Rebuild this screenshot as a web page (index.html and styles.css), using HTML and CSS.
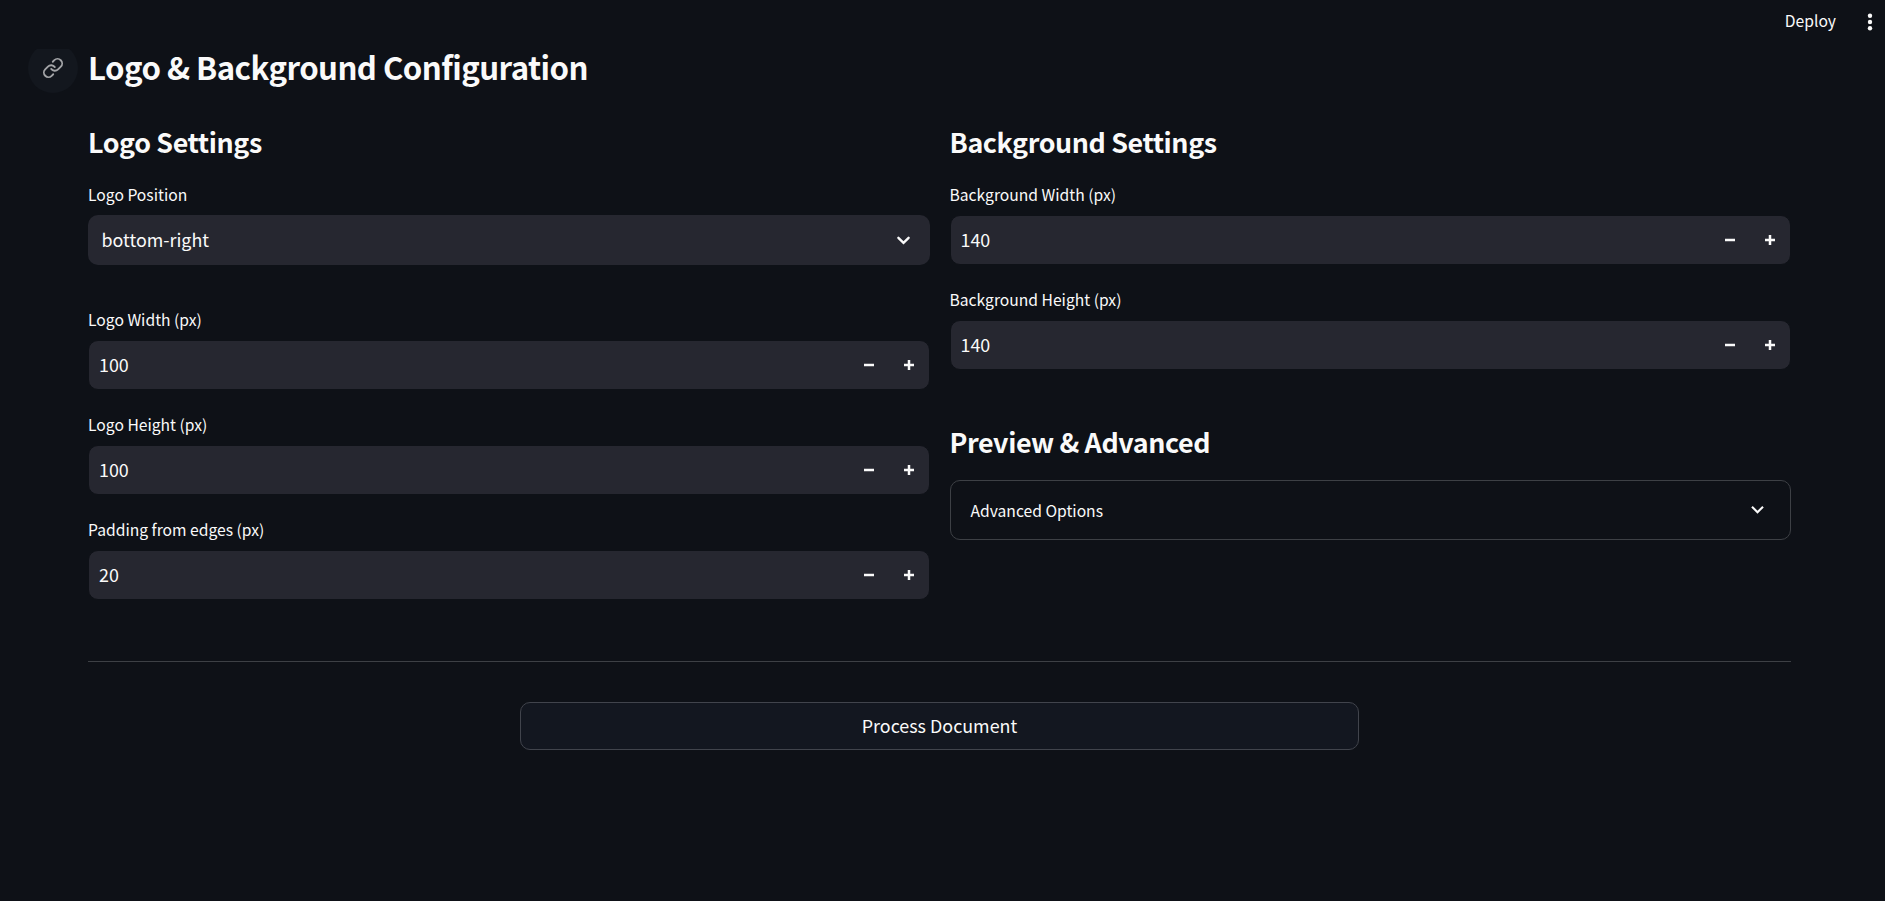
FILE: index.html
```
<!DOCTYPE html>
<html lang="en">
<head>
<meta charset="utf-8">
<title>Logo &amp; Background Configuration</title>
<link rel="stylesheet" href="styles.css">
</head>
<body>
<svg width="0" height="0" class="defs">
  <symbol id="minus" viewBox="0 0 8 8"><path d="M0 3h8v2H0z"/></symbol>
  <symbol id="plus" viewBox="0 0 8 8"><path d="M3 0h2v3h3v2H5v3H3V5H0V3h3z"/></symbol>
  <symbol id="chevron" viewBox="0 0 24 24"><path d="M7.41 8.59 12 13.17l4.59-4.58L18 10l-6 6-6-6z"/></symbol>
  <symbol id="chevron-round" viewBox="0 0 24 24"><path d="M7.1 9.4 12 14.3l4.9-4.9" fill="none" stroke="currentColor" stroke-width="2.3" stroke-linecap="round"/></symbol>
</svg>
<header class="toolbar">
  <span class="deploy">Deploy</span>
  <svg class="dots" viewBox="0 0 6 18"><circle cx="3" cy="2.8" r="2.2"/><circle cx="3" cy="9" r="2.2"/><circle cx="3" cy="15.2" r="2.2"/></svg>
</header>
<main class="page">
  <div class="title-row">
    <a class="anchor"><svg viewBox="0 0 24 24"><path d="M10 13a5 5 0 0 0 7.54.54l3-3a5 5 0 0 0-7.07-7.07l-1.72 1.71"/><path d="M14 11a5 5 0 0 0-7.54-.54l-3 3a5 5 0 0 0 7.07 7.07l1.71-1.71"/></svg></a>
    <h1 class="title">Logo &amp; Background Configuration</h1>
  </div>
  <div class="columns">
    <section class="column">
      <h2 class="heading">Logo Settings</h2>
      <div class="field field-select">
        <label class="label">Logo Position</label>
        <div class="select"><span>bottom-right</span><svg class="chevron"><use href="#chevron-round"/></svg></div>
      </div>
      <div class="field">
        <label class="label">Logo Width (px)</label>
        <div class="number"><span>100</span><svg class="step"><use href="#minus"/></svg><svg class="step"><use href="#plus"/></svg></div>
      </div>
      <div class="field">
        <label class="label">Logo Height (px)</label>
        <div class="number"><span>100</span><svg class="step"><use href="#minus"/></svg><svg class="step"><use href="#plus"/></svg></div>
      </div>
      <div class="field">
        <label class="label">Padding from edges (px)</label>
        <div class="number"><span>20</span><svg class="step"><use href="#minus"/></svg><svg class="step"><use href="#plus"/></svg></div>
      </div>
    </section>
    <section class="column">
      <h2 class="heading">Background Settings</h2>
      <div class="field">
        <label class="label">Background Width (px)</label>
        <div class="number"><span>140</span><svg class="step"><use href="#minus"/></svg><svg class="step"><use href="#plus"/></svg></div>
      </div>
      <div class="field">
        <label class="label">Background Height (px)</label>
        <div class="number"><span>140</span><svg class="step"><use href="#minus"/></svg><svg class="step"><use href="#plus"/></svg></div>
      </div>
      <h2 class="heading heading-preview">Preview &amp; Advanced</h2>
      <div class="expander"><span>Advanced Options</span><svg class="chevron"><use href="#chevron"/></svg></div>
    </section>
  </div>
  <hr class="divider">
  <button class="process">Process Document</button>
</main>
</body>
</html>
```
FILE: styles.css
```
* { box-sizing: border-box; }
body {
  margin: 0;
  height: 901px;
  background: #0e1117;
  color: #fafafa;
  font-family: "Noto Sans CJK SC", "Noto Sans", sans-serif;
  font-size: 17.9px;
  overflow: hidden;
}
.defs { display: block; position: absolute; }
svg { fill: currentColor; flex: none; }
.toolbar {
  height: 43px;
  padding: 0 12px 0 0;
  display: flex;
  align-items: center;
  justify-content: flex-end;
  gap: 31px;
}
.deploy { font-size: 15.67px; line-height: 28px; margin-bottom: 1px; }
.dots { width: 6px; height: 18px; }
.page { padding: 0 94px 0 28px; }
.title-row { display: flex; align-items: flex-start; gap: 10px; height: 76px; }
.anchor {
  width: 50px;
  height: 50px;
  border-radius: 50%;
  background: #13171e;
  clip-path: inset(6px 0 0 0);
  display: flex;
  align-items: center;
  justify-content: center;
}
.anchor svg { width: 22px; height: 22px; fill: none; stroke: #a3a4a7; stroke-width: 2; stroke-linecap: round; stroke-linejoin: round; }
.title { margin: 3px 0 0; font-size: 31.2px; line-height: 42px; font-weight: 600; letter-spacing: -0.55px; white-space: nowrap; }
.columns { display: grid; grid-template-columns: 1fr 1fr; gap: 20px; margin-left: 60px; height: 542px; }
.heading { margin: 4px 0 19px; font-size: 26.85px; line-height: 38px; font-weight: 600; letter-spacing: -0.4px; }
.field { height: 85px; margin-bottom: 20px; }
.field-select { margin-bottom: 40px; }
.label { display: block; height: 35px; padding-top: 1px; font-size: 15.67px; line-height: 28px; }
.select, .number {
  height: 50px;
  background: #262730;
  border-radius: 10px;
  display: flex;
  align-items: center;
  line-height: 28px;
}
.number { border: 1px solid #0e1117; padding: 0 15px 0 10px; gap: 30px; }
.select { padding: 0 13.5px 0 13.5px; }
.select span, .number span { flex: 1; padding-bottom: 2px; }
.step { width: 10px; height: 10px; }
.chevron { width: 25px; height: 25px; }
.heading-preview { margin: 53px 0 19px; }
.expander {
  height: 60px;
  border: 1px solid #3d4045;
  border-radius: 10px;
  padding: 0 20px;
  display: flex;
  align-items: center;
  justify-content: space-between;
  font-size: 15.67px;
}
.expander .chevron { margin-bottom: 2px; }
.divider { margin: 0 0 0 60px; border: 0; height: 1px; background: #3d4045; }
.process {
  display: block;
  width: 839px;
  height: 48px;
  margin: 40px 0 0 492px;
  border: 1px solid #41444c;
  border-radius: 10px;
  background: #131720;
  color: inherit;
  font: inherit;
  padding: 0 0 2px;
}
```
